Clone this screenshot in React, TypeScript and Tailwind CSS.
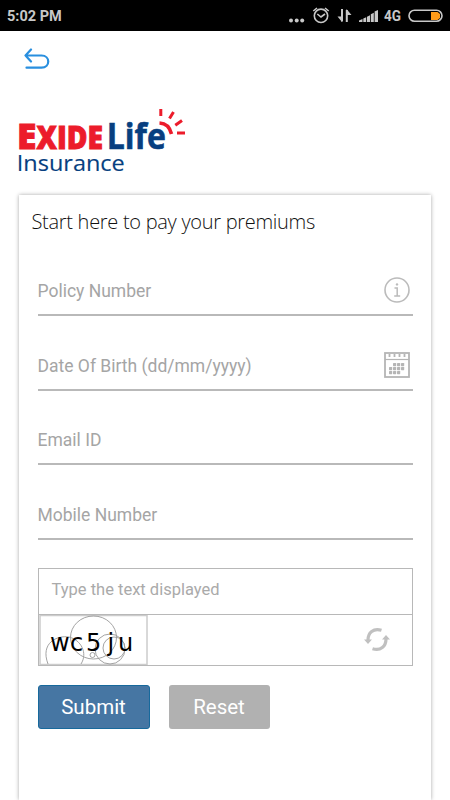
import * as React from "react"

const fields = [
  { label: "Policy Number", height: "h-[66px]", icon: <InfoIcon /> },
  { label: "Date Of Birth (dd/mm/yyyy)", height: "h-[75px]", icon: <CalendarIcon /> },
  { label: "Email ID", height: "h-[74px]", icon: null },
  { label: "Mobile Number", height: "h-[75px]", icon: null },
]

// rows and columns of filled days in the calendar icon
const days = [
  [10, 13], [14, 13], [18, 13],
  [6, 17], [10, 17], [14, 17], [18, 17],
  [6, 21], [10, 21], [14, 21],
]

function InfoIcon() {
  return (
    <svg className="h-[26px] w-[26px]" viewBox="0 0 26 26" fill="none" stroke="#bbbbbb">
      <circle cx="13" cy="13" r="12" strokeWidth="1.6" />
      <path d="M10.5 11H13.2V18.5M10.2 19H16.2" strokeWidth="1.5" />
      <circle cx="13" cy="7.4" r="1.2" fill="#bbbbbb" stroke="none" />
    </svg>
  )
}

function CalendarIcon() {
  return (
    <svg className="h-[26px] w-[26px]" viewBox="0 0 26 26" fill="none" stroke="#b5b5b5">
      <rect x="1" y="1" width="24" height="24" strokeWidth="1.8" />
      <path d="M1 7.5H25" strokeWidth="1.2" />
      <path d="M5.5 2V5M10.5 2V5M15.5 2V5M20.5 2V5" strokeWidth="1.8" />
      {days.map(([x, y]) => (
        <rect key={`${x}-${y}`} x={x - 1} y={y - 2} width="3.2" height="3.2" rx="0.6" fill="#b5b5b5" stroke="none" />
      ))}
    </svg>
  )
}

function StatusBar() {
  return (
    <header className="flex h-[31px] items-center justify-between bg-black pl-[7px] text-[#c8c8c8]">
      <span className="pt-[3px] text-[14.5px] font-bold leading-none">5:02 PM</span>
      <svg className="h-[31px] w-[170px]" viewBox="280 0 170 31" fill="none" stroke="#c8c8c8">
        <g fill="#c8c8c8" stroke="none">
          <circle cx="291" cy="20.5" r="2" />
          <circle cx="296.7" cy="20.5" r="2" />
          <circle cx="302.2" cy="20.5" r="2" />
          <path d="M359 22V20.5L362.5 19V22ZM363.3 22V18.5L366.2 17.2V22ZM367 22V16.8L370 15.3V22ZM370.8 22V14.3L373.8 12.8V22ZM374.6 22V11.5L378 10V22Z" />
        </g>
        <circle cx="321" cy="15.8" r="6.7" strokeWidth="1.6" />
        <path d="M317.3 14L321 17L325 14M313.3 11L317 8M325 8L328.7 11" strokeWidth="1.6" />
        <path d="M342 9V21.5M346.8 22V10" strokeWidth="2" />
        <path d="M337.5 16.5H342V22ZM346.5 9V15H351.5Z" fill="#c8c8c8" stroke="none" />
        <text x="384" y="21.2" fontSize="14.5" fontWeight="700" fill="#c8c8c8" stroke="none" textLength="17" lengthAdjust="spacingAndGlyphs">4G</text>
        <rect x="409" y="10.3" width="33" height="11" rx="5.5" strokeWidth="1.6" />
        <path d="M431 12H437.5L440 14V18L437.5 20H431Z" fill="#ff9b19" stroke="none" />
      </svg>
    </header>
  )
}

function Logo() {
  return (
    <svg className="ml-[18px] h-[67px] w-[170px] overflow-visible" viewBox="18 107 170 67">
      <g className="font-['Open_Sans',sans-serif]">
        <g fill="#ec1c2b" stroke="#ec1c2b" strokeWidth="0.9" fontWeight="800">
          <text x="17" y="149" fontSize="36" textLength="19.5" lengthAdjust="spacingAndGlyphs">E</text>
          <text x="36.5" y="149" fontSize="31" textLength="66.5" lengthAdjust="spacingAndGlyphs">XIDE</text>
        </g>
        <g fill="#073f80" stroke="#073f80">
          <text x="106.8" y="149.2" fontSize="35.5" fontWeight="700" strokeWidth="0.6" textLength="59" lengthAdjust="spacingAndGlyphs">Life</text>
          <text x="16.8" y="171" fontSize="22.5" strokeWidth="0.15" textLength="108" lengthAdjust="spacingAndGlyphs">Insurance</text>
        </g>
      </g>
      <g fill="none" stroke="#ec1c2b" strokeWidth="3">
        <path d="M159.5 123Q169 123.5 171.5 134" strokeWidth="3.6" />
        <path d="M160.8 109V116M173.5 112L169.5 118.5M182 120.5L175.3 125.3M177 133H185" />
      </g>
    </svg>
  )
}

function Captcha() {
  return (
    <div className="mt-7 w-[375px] border border-[#b8b8b8]">
      <div className="flex h-[46px] items-center border-b border-[#b8b8b8] pb-[5px] pl-[13px] text-[16.5px] leading-[21px] text-[#aaaaaa]">
        Type the text displayed
      </div>
      <div className="flex h-[50px] items-center justify-between pr-[22px]">
        <svg className="h-[50px] w-[109px]" viewBox="0 0 109 50">
          <rect x="1" y="0.5" width="107" height="49" fill="none" stroke="#cccccc" strokeWidth="1.5" />
          <g fill="none" stroke="#999" strokeWidth="0.9">
            <path d="M9 49C1 28 18 20 30 22C42 25 49 38 42 49" />
            <ellipse cx="54.5" cy="22.5" rx="23" ry="21.5" />
            <circle cx="71" cy="34" r="15" />
            <circle cx="75" cy="33" r="11" />
            <circle cx="53.5" cy="40" r="2.5" />
          </g>
          <text x="11 31 47 68.5 79" y="35.5" fontSize="24" fill="#000" className="font-['DejaVu_Sans',sans-serif]">
            wc5ju
          </text>
        </svg>
        <svg className="h-[26px] w-[26px]" viewBox="0 0 26 26" fill="none" stroke="#c0c0c0" strokeWidth="3.2">
          <path d="M17.5 3.3C9.5 0.8 3.8 5.5 4 13.5M8.5 21.7C16.5 24.2 22.2 19.5 22 11.5" />
          <path d="M0 12.5H8L4 17ZM18 12.5H26L22 8Z" fill="#c0c0c0" stroke="none" />
        </svg>
      </div>
    </div>
  )
}

export default function App() {
  return (
    <div className="flex h-[800px] w-[450px] flex-col overflow-hidden bg-white font-[Roboto,sans-serif]">
      <StatusBar />
      <nav className="h-[76px] pl-[24px] pt-[17px]">
        <svg className="h-[22px] w-[26px]" viewBox="0 0 26 22" fill="none" stroke="#298fdf" strokeWidth="2.2" strokeLinecap="round" strokeLinejoin="round">
          <path d="M7 1.5L1.5 7.5L7 13.5M1.5 7.5H17.5C26.5 7.5 26.5 19.7 17.5 19.7H2.5" />
        </svg>
      </nav>
      <Logo />
      <main className="ml-[19px] mt-[21px] w-[412px] flex-1 bg-white pl-[18.5px] shadow-[0_0_4px_rgba(0,0,0,0.35)]">
        <h1 className="-ml-[6px] h-[55px] whitespace-nowrap pt-[13px] font-['Open_Sans',sans-serif] text-xl font-[350] leading-7 tracking-[-0.29px] text-[#111111]">
          Start here to pay your premiums
        </h1>
        <form>
          {fields.map((field) => (
            <div
              key={field.label}
              className={`flex w-[375px] items-end justify-between border-b-[2px] border-[#b9b9b9] pb-[11px] pr-[3px] ${field.height}`}
            >
              <span className="pb-px text-[17.5px] leading-[22px] text-[#a5a5a5]">{field.label}</span>
              {field.icon}
            </div>
          ))}
          <Captcha />
          <div className="mt-[19px] flex gap-[19px] text-[20.5px] text-white">
            <button type="button" className="h-11 w-[112px] rounded-[3px] border border-[#17699c] bg-[#4676a3]">
              Submit
            </button>
            <button type="button" className="h-11 w-[101px] rounded-[3px] bg-[#b1b1b1]">
              Reset
            </button>
          </div>
        </form>
      </main>
    </div>
  )
}
